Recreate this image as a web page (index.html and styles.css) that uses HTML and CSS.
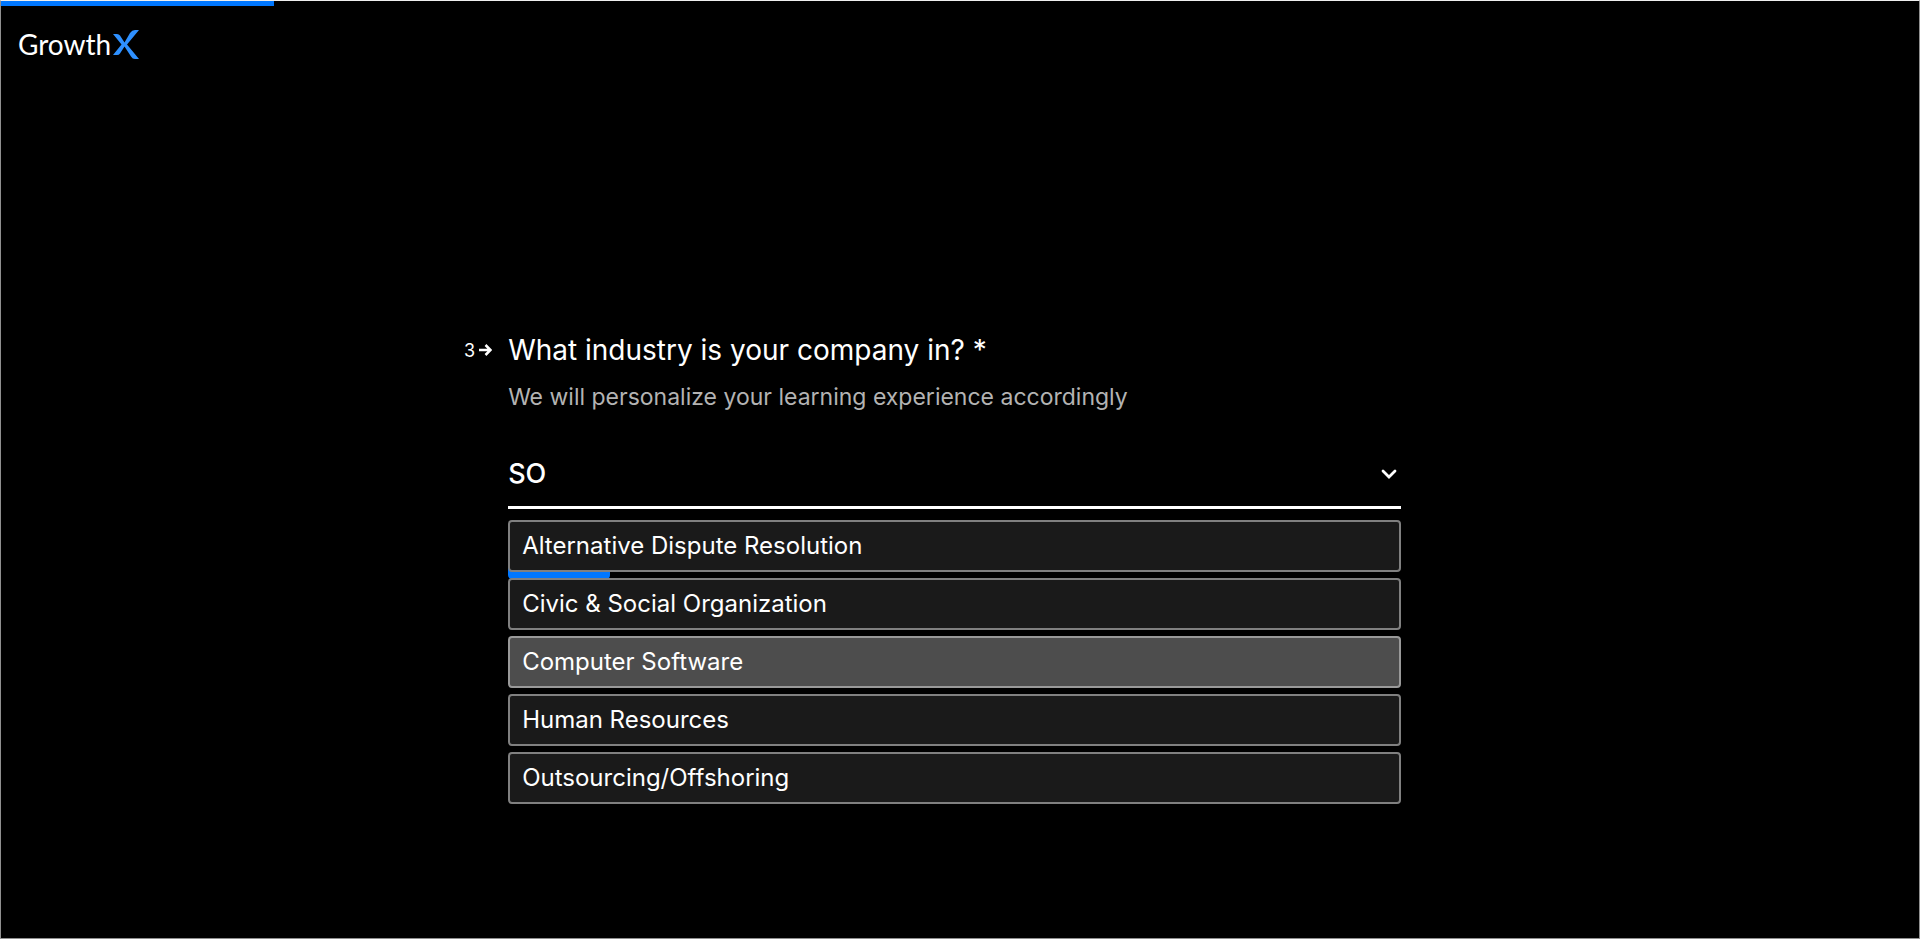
FILE: index.html
```html
<!DOCTYPE html>
<html lang="en">
<head>
<meta charset="utf-8">
<title>GrowthX</title>
<link rel="stylesheet" href="styles.css">
</head>
<body>
<div class="page">
  <div class="progress"><div class="progress-fill"></div></div>
  <header class="header">
    <a class="logo" href="#" aria-label="GrowthX"><span class="logo-text">Growth</span><svg class="logo-mark" viewBox="0 0 26 29" aria-hidden="true"><path fill="#2e90ff" d="M0 4H4Q6 4 7 5.500L11.500 12.500 17 3Q19 0 22 0H26L14 14.500 26 29H22Q19.500 29 18 26.500L11.500 16.500 7 23.500Q6 25 4 25H0L8.500 14.500Z"/></svg></a>
  </header>
  <main class="main">
    <form class="question">
      <div class="number"><span>3</span><svg class="arrow" viewBox="0 0 13 12" aria-hidden="true"><path d="M0 6H11M6.500 1 11.500 6 6.500 11" fill="none" stroke="#fff" stroke-width="2.500"/></svg></div>
      <div class="content">
        <label class="title" for="industry">What industry is your company in? *</label>
        <p class="description">We will personalize your learning experience accordingly</p>
        <div class="field">
          <input class="input" id="industry" type="text" value="SO" autocomplete="off">
          <button class="toggle" type="button" aria-label="Toggle options"><svg class="chevron" viewBox="0 0 16 10" aria-hidden="true"><path d="M2 2 8 8 14 2" fill="none" stroke="#fff" stroke-width="2.800" stroke-linecap="round"/></svg></button>
        </div>
        <div class="results">
          <div class="submit"></div>
          <ul class="options">
            <li><button class="option" type="button">Alternative Dispute Resolution</button></li>
            <li><button class="option" type="button">Civic &amp; Social Organization</button></li>
            <li><button class="option option-active" type="button">Computer Software</button></li>
            <li><button class="option" type="button">Human Resources</button></li>
            <li><button class="option" type="button">Outsourcing/Offshoring</button></li>
          </ul>
        </div>
      </div>
    </form>
  </main>
</div>
</body>
</html>
```
FILE: styles.css
```css
* { box-sizing: border-box; }
body {
  margin: 0;
  background: #000;
  color: #fff;
  font-family: Inter, "Liberation Sans", sans-serif;
}
.page {
  display: flex;
  flex-direction: column;
  min-height: 100vh;
  border: 1px solid #909090;
  border-top-color: #eee;
}
.progress { height: 5px; }
.progress-fill { width: 273px; height: 5px; background: #0077ff; }
.header { padding: 20px 17px; }
.logo {
  display: inline-flex;
  align-items: center;
  gap: 2px;
  color: #fff;
  text-decoration: none;
}
.logo-text { font: 28px/36px Lato, sans-serif; }
.logo-mark { width: 26px; height: 29px; }
.main { flex: 1; padding: 250px 24px 64px; }
.question {
  display: flex;
  gap: 16px;
  width: 100%;
  max-width: 992px;
  margin: 0 auto;
  padding-right: 55px;
}
.number {
  display: flex;
  align-items: center;
  gap: 4px;
  height: 36px;
  font-size: 18px;
}
.arrow { width: 13px; height: 12px; }
.content { flex: 1; min-width: 0; }
.title { display: block; font-size: 28px; line-height: 36px; }
.description { margin: 13px 0 0; color: #b3b3b3; font-size: 23px; line-height: 32px; }
.field {
  display: flex;
  align-items: center;
  height: 60px;
  margin-top: 36px;
  padding-bottom: 8px;
  border-bottom: 3px solid #fff;
}
.input {
  flex: 1;
  min-width: 0;
  height: 48px;
  padding: 0;
  border: 0;
  outline: 0;
  background: none;
  color: #fff;
  font: 500 27px/36px Inter, sans-serif;
}
.toggle { padding: 4px; border: 0; background: none; }
.chevron { display: block; width: 16px; height: 10px; }
.results { position: relative; padding-top: 11px; }
.submit {
  position: absolute;
  top: 22px;
  left: 0;
  width: 102px;
  height: 48px;
  border-radius: 4px;
  background: #0077ff;
}
.options {
  position: relative;
  display: grid;
  gap: 6px;
  margin: 0;
  padding: 0;
  list-style: none;
}
.option {
  display: block;
  width: 100%;
  height: 52px;
  padding: 0 12px;
  border: 2px solid #808080;
  border-radius: 4px;
  background: #1a1a1a;
  color: #fff;
  font: 24px/32px Inter, sans-serif;
  text-align: left;
}
.option-active { background: #4d4d4d; border-color: #999; }
```
